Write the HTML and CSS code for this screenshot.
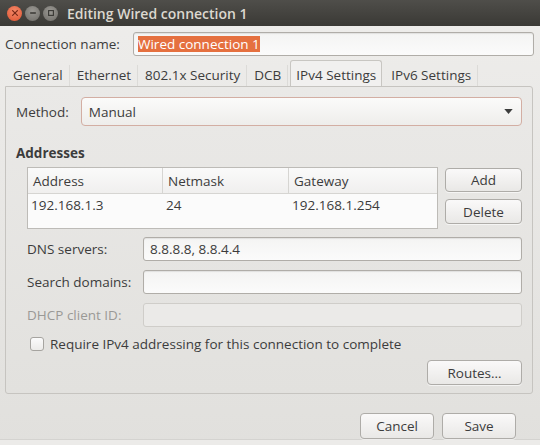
FILE: index.html
```html
<!DOCTYPE html>
<html lang="en">
<head>
    <meta charset="UTF-8">
    <title>Editing Wired connection 1</title>
    <link rel="stylesheet" href="styles.css">
</head>
<body>
    <div class="titlebar">
        <div class="win-buttons">
            <span class="wbtn close">
                <svg viewBox="0 0 10 10" width="8" height="8"><path d="M2 2L8 8M8 2L2 8" stroke="#7a2a18" stroke-width="1.6" stroke-linecap="round"/></svg>
            </span>
            <span class="wbtn">
                <svg viewBox="0 0 10 10" width="8" height="8"><path d="M2 5H8" stroke="#3a3935" stroke-width="1.6" stroke-linecap="round"/></svg>
            </span>
            <span class="wbtn">
                <svg viewBox="0 0 10 10" width="8" height="8"><rect x="2" y="2" width="6" height="6" fill="none" stroke="#3a3935" stroke-width="1.4"/></svg>
            </span>
        </div>
        <div class="title">Editing Wired connection 1</div>
    </div>

    <div class="dialog">
        <div class="name-row">
            <label class="name-label">Connection name:</label>
            <div class="entry name-entry"><span class="selected">Wired connection 1</span></div>
        </div>

        <div class="tabs">
            <span class="tab">General</span>
            <span class="tab">Ethernet</span>
            <span class="tab">802.1x Security</span>
            <span class="tab">DCB</span>
            <span class="tab active">IPv4 Settings</span>
            <span class="tab">IPv6 Settings</span>
        </div>

        <div class="page">
            <div class="method-row">
                <label>Method:</label>
                <div class="combo">
                    <span>Manual</span>
                    <svg viewBox="0 0 10 6" width="9" height="5"><path d="M0 0H10L5 6Z" fill="#3c3c3c"/></svg>
                </div>
            </div>

            <div class="section-title">Addresses</div>

            <div class="addr-row">
                <div class="addr-table">
                    <div class="addr-head">
                        <span class="col c1">Address</span>
                        <span class="col c2">Netmask</span>
                        <span class="col c3">Gateway</span>
                    </div>
                    <div class="addr-line">
                        <span class="col c1">192.168.1.3</span>
                        <span class="col c2">24</span>
                        <span class="col c3">192.168.1.254</span>
                    </div>
                </div>
                <div class="addr-buttons">
                    <button class="btn">Add</button>
                    <button class="btn">Delete</button>
                </div>
            </div>

            <div class="form">
                <label>DNS servers:</label>
                <div class="entry">8.8.8.8, 8.8.4.4</div>
                <label>Search domains:</label>
                <div class="entry"></div>
                <label class="disabled">DHCP client ID:</label>
                <div class="entry disabled"></div>
            </div>

            <div class="check-row">
                <span class="checkbox"></span>
                <span>Require IPv4 addressing for this connection to complete</span>
            </div>

            <div class="routes-row">
                <button class="btn routes">Routes…</button>
            </div>
        </div>

        <div class="actions">
            <button class="btn action">Cancel</button>
            <button class="btn action">Save</button>
        </div>
    </div>
    <div class="bottom-strip"></div>
</body>
</html>
```

FILE: styles.css
```css
body {
    margin: 0;
    width: 540px;
    height: 445px;
    overflow: hidden;
    font-family: "Open Sans", "DejaVu Sans", sans-serif;
    font-size: 13.5px;
    color: #3c3c3c;
    background: linear-gradient(#eeedeb, #e1e0dd);
}

.titlebar {
    height: 26px;
    display: flex;
    align-items: center;
    background: linear-gradient(#4f4e4a, #3a3935);
}

.win-buttons {
    display: flex;
    gap: 3px;
    padding-left: 7px;
}

.wbtn {
    width: 15px;
    height: 15px;
    border-radius: 50%;
    background: radial-gradient(circle at 50% 35%, #9a9893, #6e6c67);
    display: flex;
    align-items: center;
    justify-content: center;
}

.wbtn.close {
    background: radial-gradient(circle at 50% 35%, #f58a6a, #de5330);
}

.title {
    margin-left: 9px;
    color: #dcd8cf;
    font-size: 14px;
    font-weight: 600;
}

.dialog {
    padding: 6px 6px 0 5px;
}

.name-row {
    display: flex;
    align-items: center;
    height: 24px;
}

.name-label {
    width: 128px;
}

.entry {
    flex: 1;
    box-sizing: border-box;
    height: 24px;
    border: 1px solid #b0ada8;
    border-radius: 3px;
    background: linear-gradient(#f4f4f3, #fbfbfb);
    padding: 0 6px;
    display: flex;
    align-items: center;
    box-shadow: inset 0 1px 1px rgba(0, 0, 0, 0.08);
}

.name-entry {
    padding-left: 4px;
}

.selected {
    background: #e5703f;
    color: #fff;
    line-height: 16px;
}

.tabs {
    display: flex;
    align-items: flex-end;
    height: 28px;
    margin-top: 2px;
    padding-left: 1px;
}

.tab {
    height: 20px;
    padding: 0 6px 1px;
    display: flex;
    align-items: center;
    border-left: 1px solid transparent;
    border-right: 1px solid #dcdbd8;
}

.tab.active {
    height: 26px;
    padding: 2px 5px 0;
    background: #f1f0ef;
    border: 1px solid #c8c6c2;
    border-bottom: none;
    border-radius: 3px 3px 0 0;
    margin-left: 2px;
    margin-right: 2px;
    box-sizing: border-box;
}

.page {
    width: 528px;
    height: 308px;
    box-sizing: border-box;
    border: 1px solid #c6c4c0;
    border-radius: 0 3px 3px 3px;
    padding: 10px 10px 0 10px;
    background: linear-gradient(#eae9e7, #e2e1de);
}

.method-row {
    display: flex;
    align-items: center;
    gap: 12px;
}

.combo {
    flex: 1;
    height: 29px;
    box-sizing: border-box;
    border: 1px solid #d3aea3;
    border-radius: 4px;
    background: linear-gradient(#fbfbfa, #eeedeb);
    display: flex;
    align-items: center;
    justify-content: space-between;
    padding: 0 8px 0 7px;
}

.section-title {
    font-weight: bold;
    margin-top: 18px;
    height: 18px;
    line-height: 18px;
}

.addr-row {
    display: flex;
    gap: 7px;
    margin-top: 5px;
    padding-left: 11px;
}

.addr-table {
    width: 412px;
    height: 62px;
    box-sizing: border-box;
    border: 1px solid #bdbbb7;
    background: #fbfbfb;
}

.addr-head {
    display: flex;
    height: 25px;
    border-bottom: 1px solid #d6d5d2;
    background: linear-gradient(#fafafa, #f0efee);
}

.addr-head .col {
    display: flex;
    align-items: center;
    padding-left: 5px;
    border-right: 1px solid #d6d5d2;
}

.addr-head .c3 {
    border-right: none;
}

.addr-line {
    display: flex;
    height: 22px;
    align-items: center;
}

.addr-line .col {
    padding-left: 3px;
}

.col {
    box-sizing: border-box;
}

.c1 {
    width: 135px;
}

.c2 {
    width: 126px;
}

.c3 {
    flex: 1;
}

.addr-buttons {
    display: flex;
    flex-direction: column;
    gap: 7px;
    padding-top: 1px;
}

.btn {
    font-family: inherit;
    font-size: 13.5px;
    color: #3c3c3c;
    border: 1px solid #aeaca8;
    border-radius: 4px;
    background: linear-gradient(#faf9f9, #e9e8e6);
    box-shadow: 0 1px 0 rgba(255, 255, 255, 0.6);
    padding: 0;
    width: 77px;
    height: 24px;
}

.addr-buttons .btn:last-child {
    height: 25px;
}

.form {
    display: grid;
    grid-template-columns: 116px 1fr;
    row-gap: 9px;
    align-items: center;
    padding-left: 11px;
    margin-top: 8px;
}

.disabled {
    color: #9a9996;
}

.entry.disabled {
    background: #ebeae8;
    border-color: #cfcdc9;
    box-shadow: none;
}

.check-row {
    display: flex;
    align-items: center;
    gap: 6px;
    height: 18px;
    margin-top: 8px;
    padding-left: 14px;
}

.checkbox {
    width: 12px;
    height: 12px;
    border: 1px solid #a6a4a0;
    border-radius: 3px;
    background: linear-gradient(#fbfbfb, #ecebe9);
}

.routes-row {
    display: flex;
    justify-content: flex-end;
    margin-top: 7px;
}

.btn.routes {
    width: 95px;
    height: 25px;
}

.actions {
    display: flex;
    justify-content: flex-end;
    gap: 8px;
    padding-right: 18px;
    margin-top: 19px;
}

.btn.action {
    width: 74px;
    height: 26px;
}

.bottom-strip {
    margin-top: 0;
    height: 8px;
    border-top: 1px solid #d4d3d0;
    background: #ecebe9;
}
```
